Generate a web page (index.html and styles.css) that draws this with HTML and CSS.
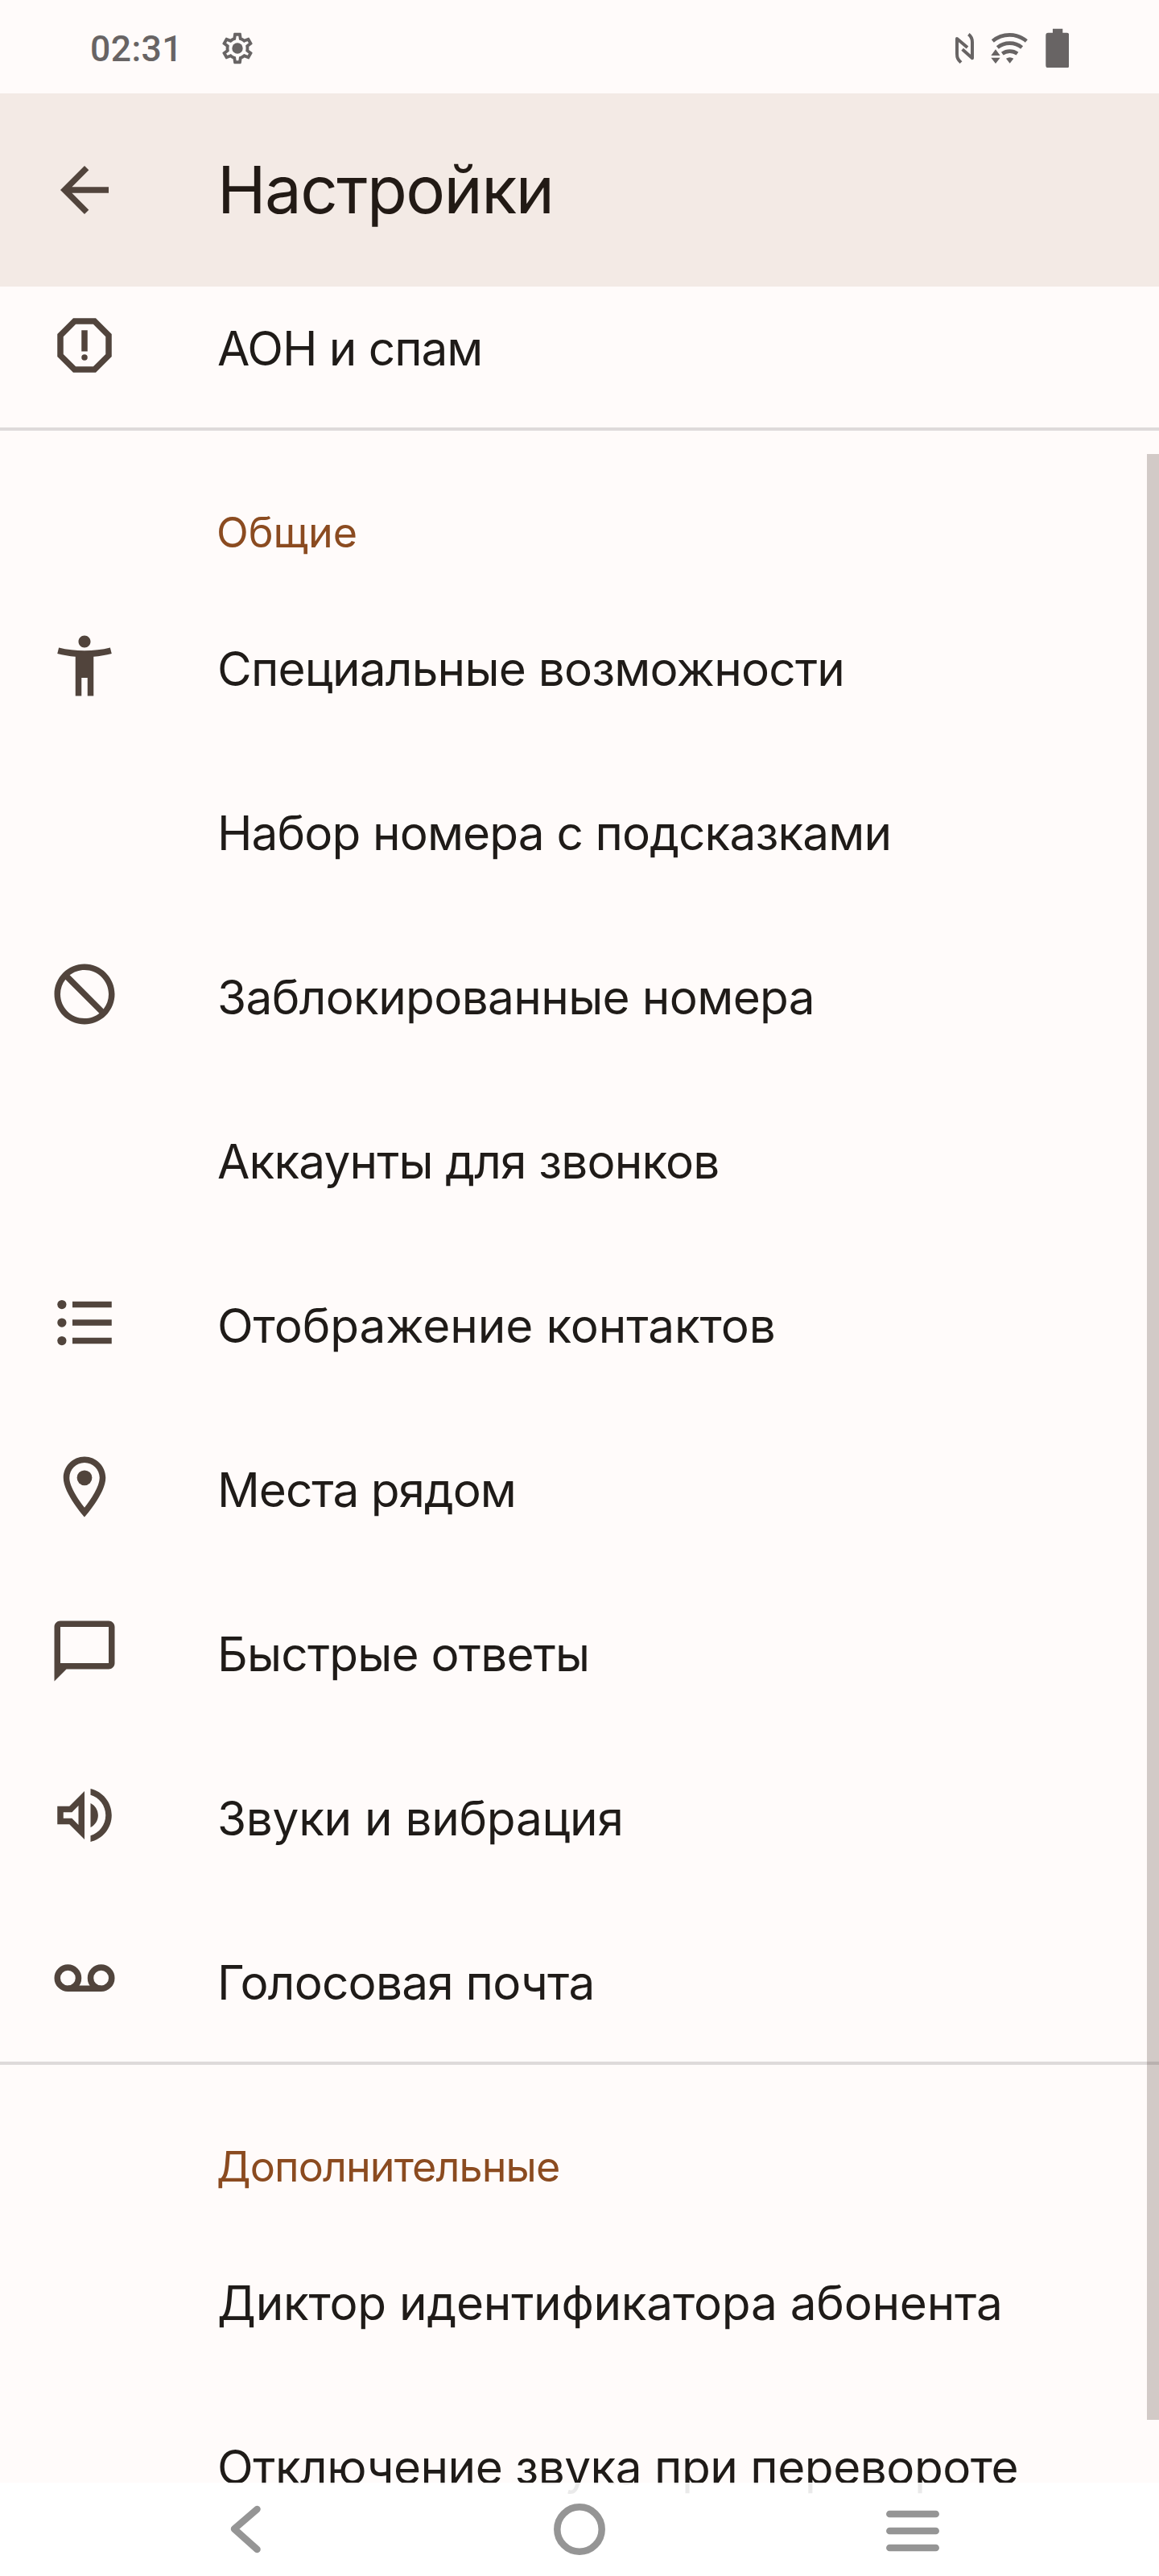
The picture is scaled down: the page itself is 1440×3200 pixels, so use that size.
FILE: index.html
```html
<!DOCTYPE html>
<html lang="ru">
<head>
<meta charset="utf-8">
<title>Настройки</title>
<link rel="stylesheet" href="styles.css">
</head>
<body>
<div class="screen">
  <header class="status">
    <span class="clock">02:31</span>
    <svg class="gear" viewBox="0 0 24 24"><path d="M19.43 12.98c.04-.32.07-.64.07-.98 0-.34-.03-.66-.07-.98l2.11-1.65c.19-.15.24-.42.12-.64l-2-3.46a.5.5 0 0 0-.61-.22l-2.49 1c-.52-.4-1.08-.73-1.69-.98l-.38-2.65A.49.49 0 0 0 14 2h-4c-.25 0-.46.18-.49.42l-.38 2.65c-.61.25-1.17.59-1.69.98l-2.49-1a.5.5 0 0 0-.61.22l-2 3.46c-.13.22-.07.49.12.64l2.11 1.65c-.04.32-.07.65-.07.98s.03.66.07.98l-2.11 1.65c-.19.15-.24.42-.12.64l2 3.46c.12.22.39.3.61.22l2.49-1c.52.4 1.08.73 1.69.98l.38 2.65c.03.24.24.42.49.42h4c.25 0 .46-.18.49-.42l.38-2.65c.61-.25 1.17-.59 1.69-.98l2.49 1a.5.5 0 0 0 .61-.22l2-3.46c.12-.22.07-.49-.12-.64l-2.11-1.65zm-1.98-1.71c.04.31.05.52.05.73s-.02.43-.05.73l-.14 1.13.89.7 1.08.84-.7 1.21-1.27-.51-1.04-.42-.9.68c-.43.32-.84.56-1.25.73l-1.06.43-.16 1.13-.2 1.35h-1.4l-.19-1.35-.16-1.13-1.06-.43c-.43-.18-.83-.41-1.23-.71l-.91-.7-1.06.43-1.27.51-.7-1.21 1.08-.84.89-.7-.14-1.13c-.03-.31-.05-.54-.05-.74s.02-.43.05-.73l.14-1.13-.89-.7-1.08-.84.7-1.21 1.27.51 1.04.42.9-.68c.43-.32.84-.56 1.25-.73l1.06-.43.16-1.13.2-1.35h1.39l.19 1.35.16 1.13 1.06.43c.43.18.83.41 1.23.71l.91.7 1.06-.43 1.27-.51.7 1.21-1.07.85-.89.7.14 1.13z"/><circle cx="12" cy="12" r="3.5"/></svg>
    <svg class="indicators" viewBox="0 0 430 150">
      <g fill="none" stroke="#686464" stroke-width="12" stroke-linejoin="round">
        <path d="M27 131C15 119 12 113 12 98V42L51 75"/>
        <path d="M55 26C67 35 69 43 69 55V115L32 82"/>
        <path d="M145 51a98 98 0 0 1 126 0M163 75a73 73 0 0 1 91 0M181 98a48 48 0 0 1 56 0" stroke-width="14"/>
      </g>
      <g fill="#686464">
        <path d="M195 116q14-9 28 0l-14 18zM156 82l17 23h-34zM139 113h34l-17 22z"/>
        <path d="M369 5h37v15h15q9 0 9 9v113q0 9-9 9h-69q-9 0-9-9V29q0-9 9-9h17z"/>
      </g>
    </svg>
  </header>
  <div class="appbar">
    <svg class="icon" viewBox="0 0 24 24"><path d="M20 11H7.83l5.59-5.59L12 4l-8 8 8 8 1.41-1.41L7.83 13H20v-2z"/></svg>
    <h1 class="title">Настройки</h1>
  </div>
  <main class="list">
    <div class="row first"><svg class="icon" viewBox="0 0 24 24"><path d="M15.73 3H8.27L3 8.27v7.46L8.27 21h7.46L21 15.73V8.27L15.73 3zM19 14.9L14.9 19H9.1L5 14.9V9.1L9.1 5h5.8L19 9.1v5.8z"/><circle cx="12" cy="16" r="1"/><path d="M11 7h2v7h-2z"/></svg><span class="label t-spam">АОН и спам</span></div>
    <section class="group">
      <h2 class="heading t-general">Общие</h2>
      <div class="row"><svg class="icon" viewBox="0 0 24 24"><path d="M20.5 6c-2.61.7-5.67 1-8.5 1s-5.89-.3-8.5-1L3 8c1.86.5 4 .83 6 1v13h2v-6h2v6h2V9c2-.17 4.14-.5 6-1l-.5-2zM12 6c1.1 0 2-.9 2-2s-.9-2-2-2-2 .9-2 2 .9 2 2 2z"/></svg><span class="label t-access">Специальные возможности</span></div>
      <div class="row"><span class="label t-assist">Набор номера с подсказками</span></div>
      <div class="row"><svg class="icon" viewBox="0 0 24 24"><path d="M12 2C6.48 2 2 6.48 2 12s4.48 10 10 10 10-4.48 10-10S17.52 2 12 2zM4 12c0-4.42 3.58-8 8-8 1.85 0 3.55.63 4.9 1.69L5.69 16.9A7.9 7.9 0 0 1 4 12zm8 8c-1.85 0-3.55-.63-4.9-1.69L18.31 7.1A7.9 7.9 0 0 1 20 12c0 4.42-3.58 8-8 8z" transform="matrix(-1 0 0 1 24 0)"/></svg><span class="label t-blocked">Заблокированные номера</span></div>
      <div class="row"><span class="label t-accounts">Аккаунты для звонков</span></div>
      <div class="row"><svg class="icon" viewBox="0 0 24 24"><circle cx="4.5" cy="6" r="1.5"/><circle cx="4.5" cy="12" r="1.5"/><circle cx="4.5" cy="18" r="1.5"/><path d="M8 5h13v2H8zM8 11h13v2H8zM8 17h13v2H8z"/></svg><span class="label t-display">Отображение контактов</span></div>
      <div class="row"><svg class="icon" viewBox="0 0 24 24"><path d="M12 2C8.13 2 5 5.13 5 9c0 5.25 7 13 7 13s7-7.75 7-13c0-3.87-3.13-7-7-7zM7 9c0-2.76 2.24-5 5-5s5 2.24 5 5c0 2.88-2.88 7.19-5 9.88C9.92 16.21 7 11.85 7 9z"/><circle cx="12" cy="9" r="2.5"/></svg><span class="label t-nearby">Места рядом</span></div>
      <div class="row"><svg class="icon" viewBox="0 0 24 24"><path d="M20 2H4c-1.1 0-2 .9-2 2v18l4-4h14c1.1 0 2-.9 2-2V4c0-1.1-.9-2-2-2zm0 14H4V4h16v12z"/></svg><span class="label t-replies">Быстрые ответы</span></div>
      <div class="row"><svg class="icon" viewBox="0 0 24 24"><path d="M3 9v6h4l5 5V4L7 9H3zm7-.17v6.34L7.83 13H5v-2h2.83L10 8.83zM16.5 12c0-1.77-1.02-3.29-2.5-4.03v8.05c1.48-.73 2.5-2.25 2.5-4.02zM14 3.23v2.06c2.89.86 5 3.54 5 6.71s-2.11 5.85-5 6.71v2.06c4.01-.91 7-4.49 7-8.77s-2.99-7.86-7-8.77z"/></svg><span class="label t-sounds">Звуки и вибрация</span></div>
      <div class="row"><svg class="icon" viewBox="0 0 24 24"><g fill="none" stroke="#51443c" stroke-width="2"><circle cx="6.5" cy="11.5" r="3.5"/><circle cx="17.5" cy="11.5" r="3.5"/><path d="M6.5 15h11"/></g></svg><span class="label t-voicemail">Голосовая почта</span></div>
    </section>
    <section class="group">
      <h2 class="heading t-more">Дополнительные</h2>
      <div class="row"><span class="label t-announce">Диктор идентификатора абонента</span></div>
      <div class="row"><span class="label t-flip">Отключение звука при перевороте</span></div>
    </section>
  </main>
  <div class="scrollbar"></div>
  <nav class="navbar">
    <svg class="nav-back" viewBox="0 0 38 60"><path d="M33.5 5L5 29.5 33.5 55"/></svg>
    <svg class="nav-home" viewBox="0 0 64 64"><circle cx="32" cy="32" r="27.7"/></svg>
    <svg class="nav-menu" viewBox="0 0 66 52"><path d="M4.3 5h57.4M4.3 26h57.4M4.3 47h57.4"/></svg>
  </nav>
</div>
</body>
</html>
```
FILE: styles.css
```css
* { box-sizing: border-box; }

body { margin: 0; }

.screen {
  position: relative;
  display: flex;
  flex-direction: column;
  width: 1440px;
  height: 3200px;
  overflow: hidden;
  background: #fffbfa;
  font-family: Inter, Roboto, "Liberation Sans", sans-serif;
}

/* Status bar */
.status {
  display: flex;
  flex: none;
  align-items: flex-start;
  height: 116px;
  padding: 35px 112px 0 112px;
}

.clock {
  width: 160px;
  color: #686464;
  font: 500 44.5px/53px Roboto, sans-serif;
  letter-spacing: .4px;
}

.gear {
  width: 46px;
  height: 46px;
  margin-top: 2px;
  fill: #686464;
}

.indicators {
  width: 143.3px;
  height: 50px;
  margin: -1.5px 0 0 auto;
}

/* App bar */
.appbar {
  display: flex;
  flex: none;
  align-items: center;
  height: 240px;
  padding-left: 60px;
  background: #f3eae5;
}

.icon {
  flex: none;
  width: 90px;
  height: 90px;
  fill: #51443c;
}

.title {
  margin: 0 0 1px 120px;
  color: #221a15;
  font-size: 81.5px;
  font-weight: 400;
  line-height: 100px;
  letter-spacing: -1.55px;
}

/* Settings list */
.list {
  flex: 1;
  min-height: 0;
  overflow: hidden;
}

.row {
  display: grid;
  grid-template-columns: 210px 1fr;
  align-items: center;
  height: 204px;
  padding-left: 60px;
}

.first { margin-top: -29px; }

.label {
  grid-column: 2;
  padding-top: 8px;
  color: #1f1b18;
  font-size: 58.5px;
  line-height: 72px;
  white-space: nowrap;
}

.group { border-top: 4px solid #dedada; }

.heading {
  height: 190px;
  margin: 0;
  padding: 63px 0 0 269px;
  color: #8b4b20;
  font-size: 52px;
  font-weight: 400;
  line-height: 127px;
}

.t-spam { letter-spacing: -1.05px; }
.t-general { letter-spacing: 0; }
.t-access { letter-spacing: -.79px; }
.t-assist { letter-spacing: -.88px; }
.t-blocked { letter-spacing: -.65px; }
.t-accounts { letter-spacing: -.84px; }
.t-display { letter-spacing: -.12px; }
.t-nearby { letter-spacing: -1.02px; }
.t-replies { letter-spacing: -.8px; }
.t-sounds { letter-spacing: -.3px; }
.t-voicemail { letter-spacing: -.78px; }
.t-more { letter-spacing: -.9px; }
.t-announce { letter-spacing: -.25px; }
.t-flip { letter-spacing: -.5px; }

.scrollbar {
  position: absolute;
  top: 564px;
  right: 0;
  width: 15px;
  height: 2442px;
  background: rgba(81, 60, 54, .26);
}

/* System navigation, translucent over the list */
.navbar {
  position: absolute;
  right: 0;
  bottom: 0;
  left: 0;
  display: flex;
  align-items: center;
  justify-content: space-between;
  height: 116px;
  padding: 0 273px 0 286px;
  background: rgba(255, 255, 255, .91);
  fill: none;
  stroke: #959595;
  stroke-width: 8.5px;
  stroke-linecap: round;
  stroke-linejoin: round;
}

.nav-back { width: 38px; height: 60px; }
.nav-home { width: 64px; height: 64px; margin-left: 14px; }
.nav-menu { width: 66px; height: 52px; margin-top: 4px; }
```
